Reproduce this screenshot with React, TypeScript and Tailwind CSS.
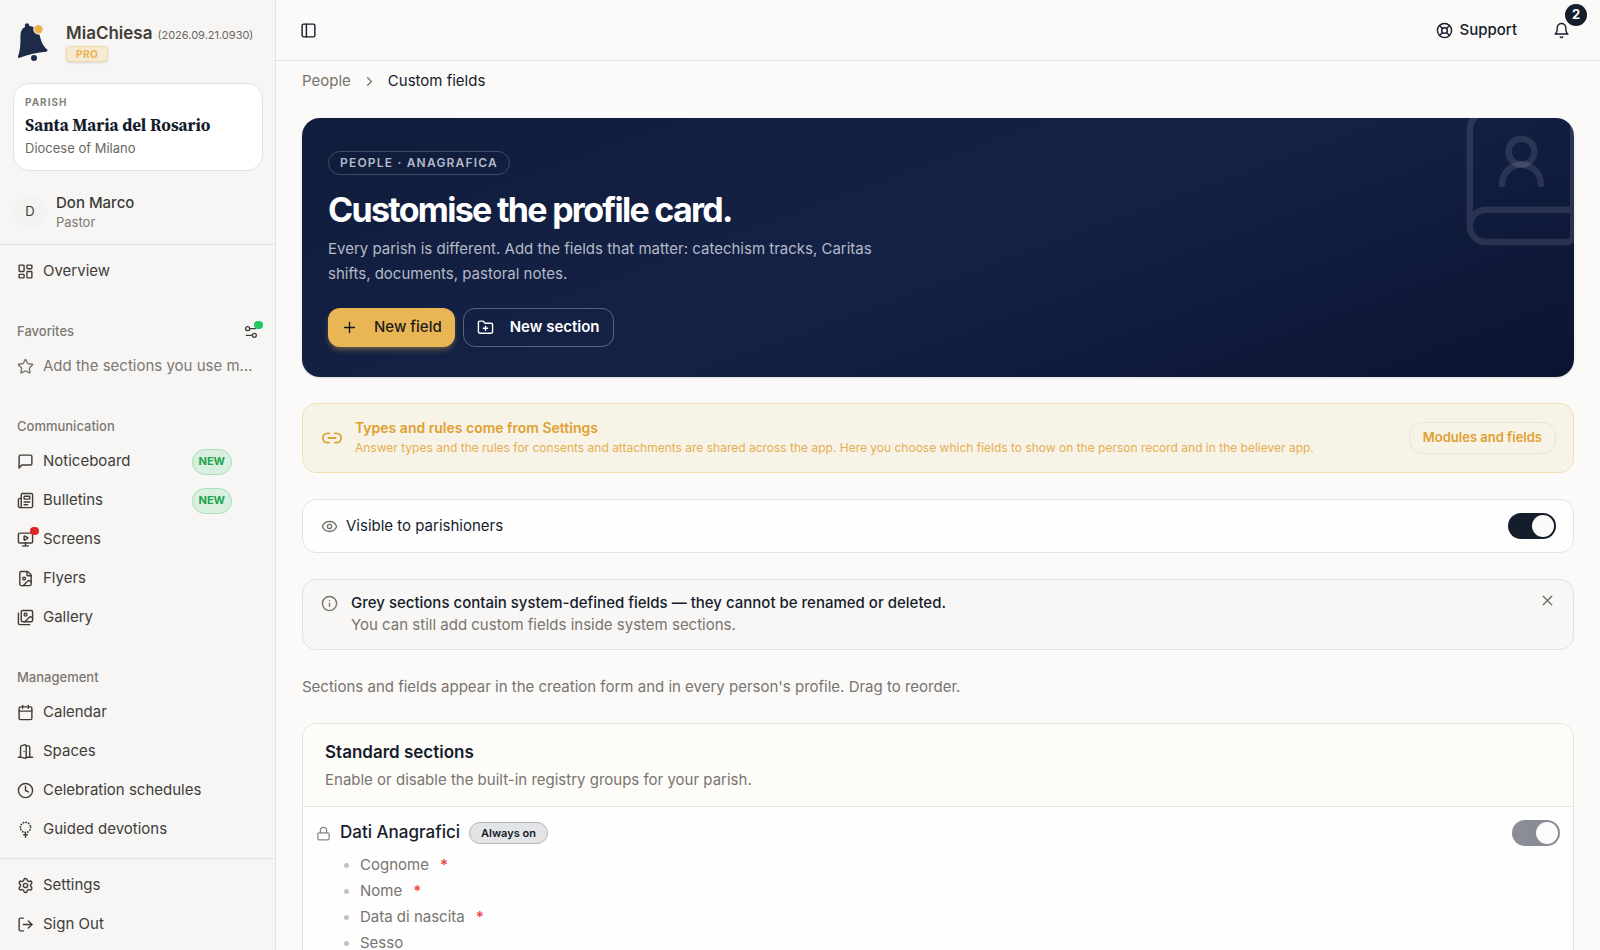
import type { ComponentType, ReactNode } from 'react'
import {
  Calendar,
  ChevronRight,
  Clock,
  Eye,
  FileImage,
  FolderPlus,
  Info,
  LayoutDashboard,
  LifeBuoy,
  Link2,
  Lock,
  LogOut,
  MonitorPlay,
  Newspaper,
  PanelLeft,
  Plus,
  Settings,
  Settings2,
  Star,
  X,
} from 'lucide-react'

type Icon = ComponentType<{ className?: string }>

interface NavItem {
  label: string
  icon: Icon
  isNew?: boolean
  alert?: boolean
}

function Svg({ className, children }: { className?: string; children: ReactNode }) {
  return (
    <svg
      className={className}
      viewBox="0 0 24 24"
      fill="none"
      stroke="currentColor"
      strokeWidth={2}
      strokeLinecap="round"
      strokeLinejoin="round"
    >
      {children}
    </svg>
  )
}

function MessageIcon({ className }: { className?: string }) {
  return (
    <Svg className={className}>
      <path d="M21 15a2 2 0 0 1-2 2H7l-4 4V5a2 2 0 0 1 2-2h14a2 2 0 0 1 2 2z" />
    </Svg>
  )
}

function ImagesIcon({ className }: { className?: string }) {
  return (
    <Svg className={className}>
      <path d="M18 22H4a2 2 0 0 1-2-2V6" />
      <path d="m22 13-1.296-1.296a2.41 2.41 0 0 0-3.408 0L11 18" />
      <circle cx="12" cy="8" r="2" />
      <rect width="16" height="16" x="6" y="2" rx="2" />
    </Svg>
  )
}

function DoorIcon({ className }: { className?: string }) {
  return (
    <Svg className={className}>
      <path d="M13 4h3a2 2 0 0 1 2 2v14" />
      <path d="M2 20h3" />
      <path d="M13 20h9" />
      <path d="M10 12v.01" />
      <path d="M13 4.562v16.157a1 1 0 0 1-1.242.97L5 20V5.562a2 2 0 0 1 1.515-1.94l4-1A2 2 0 0 1 13 4.561Z" />
    </Svg>
  )
}

function BellIcon({ className }: { className?: string }) {
  return (
    <Svg className={className}>
      <path d="M6 8a6 6 0 0 1 12 0c0 7 3 9 3 9H3s3-2 3-9" />
      <path d="M10.3 21a1.94 1.94 0 0 0 3.4 0" />
    </Svg>
  )
}

function RosaryIcon({ className }: { className?: string }) {
  return (
    <Svg className={className}>
      <circle cx="12" cy="9" r="7.2" strokeDasharray="0.1 3.67" strokeWidth={2.6} />
      <path d="M12 17v6M9.500 19.500h5" strokeWidth={2} />
    </Svg>
  )
}

function Logo() {
  return (
    <svg className="h-10 w-8 shrink-0" viewBox="0 0 32 40">
      <g fill="#1e2b48">
        <circle cx="10" cy="3.5" r="2.2" />
        <path d="M9 4.5C5 6 3.6 9 3.5 14c-.1 6 .2 13-2.4 20-.5 1.500.2 2.200 1.500 1.700 9-3.500 18-5.500 26.500-6 1.700-.1 2-1.200.9-2.100C25 23 24 18 22.500 13 20.500 6.500 16 2.600 9 4.500Z" />
        <circle cx="17" cy="36" r="3" />
      </g>
      <circle cx="21.500" cy="7.300" r="5.200" fill="#f7f6f4" />
      <circle cx="21.500" cy="7.300" r="4.200" fill="#eab350" />
    </svg>
  )
}

const COMMUNICATION: NavItem[] = [
  { label: 'Noticeboard', icon: MessageIcon, isNew: true },
  { label: 'Bulletins', icon: Newspaper, isNew: true },
  { label: 'Screens', icon: MonitorPlay, alert: true },
  { label: 'Flyers', icon: FileImage },
  { label: 'Gallery', icon: ImagesIcon },
]

const MANAGEMENT: NavItem[] = [
  { label: 'Calendar', icon: Calendar },
  { label: 'Spaces', icon: DoorIcon },
  { label: 'Celebration schedules', icon: Clock },
  { label: 'Guided devotions', icon: RosaryIcon },
]

const FIELDS = [
  { label: 'Cognome', required: true },
  { label: 'Nome', required: true },
  { label: 'Data di nascita', required: true },
  { label: 'Sesso', required: false },
]

function NavLink({ label, icon: ItemIcon, isNew, alert }: NavItem) {
  return (
    <a href="#" className="flex h-[35px] items-center gap-[9px] rounded-lg px-[17px] text-[#403d39] hover:bg-black/5">
      <span className="relative shrink-0">
        <ItemIcon className="size-[17px]" />
        {alert && <span className="absolute -top-1 -right-[5px] h-2 w-[9px] rounded-full bg-[#dc2626]" />}
      </span>
      <span className="truncate">{label}</span>
      {isNew && (
        <span className="mr-[26px] ml-auto flex h-[26px] items-center rounded-full border border-[#a9dfbd] bg-[#d9efe0] px-[6px] text-[11px] font-bold text-[#1fa34f]">
          NEW
        </span>
      )}
    </a>
  )
}

function NavGroup({ title, items }: { title: string; items: NavItem[] }) {
  return (
    <section>
      <h2 className="flex h-[34px] items-center px-[17px] text-[13px] font-medium text-[#7c7873]">{title}</h2>
      <div className="flex flex-col gap-1">
        {items.map((item) => (
          <NavLink key={item.label} {...item} />
        ))}
      </div>
    </section>
  )
}

function Sidebar() {
  return (
    <aside className="flex w-[276px] shrink-0 flex-col border-r border-[#e3e3e1] bg-[#f7f6f4] text-[#403d39]">
      <div className="flex flex-col border-b border-[#e3e3e1] px-3 pt-[22px] pb-[13px] pl-[13px]">
        <div className="flex gap-[17px] pl-1">
          <Logo />
          <div className="flex flex-col items-start">
            <div className="flex items-baseline gap-[5px] leading-[22px]">
              <span className="text-[17px] font-semibold">MiaChiesa</span>
              <span className="text-[11px] text-[#6b6762]">(2026.09.21.0930)</span>
            </div>
            <span className="flex h-4 items-center rounded-[4px] border border-[#f3d9a8] bg-[#f7ead2] px-[9px] text-[10px] font-bold tracking-wider text-[#eab350] shadow-sm">
              PRO
            </span>
          </div>
        </div>

        <div className="mt-[21px] flex h-[88px] flex-col rounded-2xl border border-[#e3e3e1] bg-white px-[11px] pt-[10px]">
          <span className="text-[10px] leading-4 font-bold tracking-widest text-[#85817b]">PARISH</span>
          <span className="font-['Source_Serif_4','Liberation_Serif',serif] text-[17px] leading-[30px] font-bold text-[#151c2c]">
            Santa Maria del Rosario
          </span>
          <span className="text-[13px] leading-4 text-[#6b6762]">Diocese of Milano</span>
        </div>

        <div className="mt-[22px] flex items-center gap-[9px]">
          <span className="flex size-[34px] items-center justify-center rounded-full bg-[#f3f3f1] text-[13px]">D</span>
          <div className="flex flex-col">
            <span className="text-[15px] leading-5 font-medium">Don Marco</span>
            <span className="text-[13px] leading-[18px] text-[#7c7873]">Pastor</span>
          </div>
        </div>
      </div>

      <nav className="flex min-h-0 flex-1 flex-col gap-[26px] overflow-hidden pt-[9px] text-[15px]">
        <NavLink label="Overview" icon={LayoutDashboard} />
        <section>
          <div className="flex h-[34px] items-center justify-between pr-4 pl-[17px]">
            <h2 className="text-[13px] font-medium text-[#7c7873]">Favorites</h2>
            <button type="button" aria-label="Edit favorites" className="relative">
              <Settings2 className="size-4" />
              <span className="absolute -top-[3px] -right-1 h-2 w-[9px] rounded-full bg-[#22c55e]" />
            </button>
          </div>
          <a href="#" className="flex h-[35px] items-center gap-[9px] px-[17px] text-[#7c7873]">
            <Star className="size-[17px] shrink-0" />
            <span className="truncate">Add the sections you use most here</span>
          </a>
        </section>
        <NavGroup title="Communication" items={COMMUNICATION} />
        <NavGroup title="Management" items={MANAGEMENT} />
      </nav>

      <div className="flex flex-col gap-1 border-t border-[#e3e3e1] pt-[9px] pb-2 text-[15px]">
        <NavLink label="Settings" icon={Settings} />
        <NavLink label="Sign Out" icon={LogOut} />
      </div>
    </aside>
  )
}

function Switch({ label, disabled }: { label: string; disabled?: boolean }) {
  return (
    <input
      type="checkbox"
      role="switch"
      aria-label={label}
      defaultChecked
      disabled={disabled}
      className="flex h-[26px] w-12 shrink-0 appearance-none items-center rounded-full bg-[#a8a8a8] px-[2px] before:size-[22px] before:rounded-full before:bg-[#fbfaf8] checked:justify-end checked:bg-[#151c2c] disabled:opacity-50"
    />
  )
}

function Hero() {
  return (
    <section className="relative overflow-hidden rounded-[18px] bg-linear-[160deg,#101c3b_0%,#142246_50%,#0b1431_100%] px-[26px] pt-[33px] pb-[30px] shadow-sm">
      <svg
        className="absolute -top-[18px] -right-[25px] size-[155px] text-white/11"
        viewBox="0 0 24 24"
        fill="none"
        strokeWidth={1}
        stroke="currentColor"
        strokeLinecap="round"
        strokeLinejoin="round"
      >
        <path d="M15 13a3 3 0 1 0-6 0" />
        <path d="M4 19.500v-15A2.500 2.500 0 0 1 6.500 2H19a1 1 0 0 1 1 1v18a1 1 0 0 1-1 1H6.500a1 1 0 0 1 0-5H20" />
        <circle cx="12" cy="8" r="2" />
      </svg>
      <div className="flex flex-col items-start">
        <span className="flex h-6 items-center rounded-full border border-white/20 px-[11px] text-[12px] font-semibold tracking-widest text-[#b4bac7]">
          PEOPLE · ANAGRAFICA
        </span>
        <h1 className="mt-[14px] text-[34px] leading-[42px] font-bold tracking-tighter text-white">
          Customise the profile card.
        </h1>
        <p className="mt-[5px] max-w-[580px] text-[15px] leading-[25px] text-[#b4bac7]">
          Every parish is different. Add the fields that matter: catechism tracks, Caritas shifts, documents, pastoral
          notes.
        </p>
        <div className="mt-[22px] flex gap-2">
          <button
            type="button"
            className="flex h-[39px] items-center gap-4 rounded-xl bg-[#eab554] px-[13px] text-[15px] font-medium text-[#1c1c1c] shadow-md shadow-[#eab554]/30"
          >
            <Plus className="size-[17px]" />
            New field
          </button>
          <button
            type="button"
            className="flex h-[39px] items-center gap-4 rounded-xl border border-white/30 px-[13px] text-[15px] font-semibold text-white"
          >
            <FolderPlus className="size-[17px]" />
            New section
          </button>
        </div>
      </div>
    </section>
  )
}

export default function App() {
  return (
    <div className="flex h-screen overflow-hidden bg-[#fbfaf8] font-['Inter',sans-serif] text-[15px] text-[#151c2c] antialiased">
      <Sidebar />

      <div className="flex min-w-0 flex-1 flex-col">
        <header className="flex h-[61px] shrink-0 items-center justify-between border-b border-[#e3e3e1] px-6">
          <button type="button" aria-label="Toggle sidebar">
            <PanelLeft className="size-[17px]" />
          </button>
          <div className="flex items-center gap-9 pr-[6px]">
            <a href="#" className="flex items-center gap-[7px] font-medium">
              <LifeBuoy className="size-[17px]" />
              Support
            </a>
            <button type="button" aria-label="Notifications" className="relative">
              <BellIcon className="size-[17px]" />
              <span className="absolute -top-[18px] left-3 flex size-[22px] items-center justify-center rounded-full bg-[#151c2c] text-[13px] font-bold text-white">
                2
              </span>
            </button>
          </div>
        </header>

        <main className="flex min-h-0 flex-1 flex-col gap-[26px] overflow-hidden px-[26px] pt-[9px] *:shrink-0">
          <nav aria-label="Breadcrumb" className="flex h-[22px] items-center gap-[11px]">
            <a href="#" className="text-[#78746e]">
              People
            </a>
            <ChevronRight className="size-[15px] text-[#78746e]" />
            <span>Custom fields</span>
          </nav>

          <Hero />

          <section className="flex items-center gap-3 rounded-[14px] border border-[#f3dfb5] bg-[#f7f3e7] py-[14px] pr-[17px] pl-[18px]">
            <Link2 className="size-[22px] shrink-0 text-[#e0a238]" />
            <div className="min-w-0 flex-1">
              <h2 className="text-[14px] leading-5 font-semibold text-[#e0a030]">Types and rules come from Settings</h2>
              <p className="text-[12px] leading-5 text-[#e6ae52]">
                Answer types and the rules for consents and attachments are shared across the app. Here you choose which
                fields to show on the person record and in the believer app.
              </p>
            </div>
            <button
              type="button"
              className="h-8 shrink-0 rounded-[14px] border border-[#e9e5db] px-[13px] text-[13px] font-semibold text-[#e0a030]"
            >
              Modules and fields
            </button>
          </section>

          <label className="flex h-[54px] items-center gap-2 rounded-[14px] border border-[#e3e3e1] bg-[#fefefe] pr-[17px] pl-[18px]">
            <Eye className="size-[17px] text-[#78746e]" />
            <span className="flex-1">Visible to parishioners</span>
            <Switch label="Visible to parishioners" />
          </label>

          <section className="flex items-start gap-[13px] rounded-[14px] border border-[#e3e3e1] bg-[#f8f7f5] py-[12px] pr-[17px] pl-[18px]">
            <Info className="mt-[3px] size-[17px] shrink-0 text-[#78746e]" />
            <div className="flex-1 leading-[22px]">
              <p className="font-medium">
                Grey sections contain system-defined fields — they cannot be renamed or deleted.
              </p>
              <p className="pb-px text-[#78746e]">You can still add custom fields inside system sections.</p>
            </div>
            <button type="button" aria-label="Dismiss" className="text-[#78746e]">
              <X className="size-[17px]" />
            </button>
          </section>

          <p className="py-px leading-[19px] text-[#78746e]">
            Sections and fields appear in the creation form and in every person's profile. Drag to reorder.
          </p>

          <section className="rounded-[14px] border border-[#e3e3e1] bg-[#fefefe]">
            <div className="rounded-t-[14px] border-b border-[#e3e3e1] bg-[#fdfcf9] px-[22px] pt-[14px] pb-3">
              <h2 className="text-[17px] leading-7 font-semibold">Standard sections</h2>
              <p className="leading-7 text-[#78746e]">
                Enable or disable the built-in registry groups for your parish.
              </p>
            </div>
            <div className="px-[13px] pt-[13px] pb-6">
              <div className="flex items-center gap-[9px]">
                <Lock className="size-[15px] text-[#8b8781]" />
                <h3 className="text-[17px] font-medium">Dati Anagrafici</h3>
                <span className="flex h-[22px] items-center rounded-full border border-[#b3b5b9] bg-[#e3e4e5] px-[11px] text-[11px] font-semibold">
                  Always on
                </span>
                <span className="ml-auto flex">
                  <Switch label="Dati Anagrafici" disabled />
                </span>
              </div>
              <ul className="mt-[6px] pl-7 text-[#78746e]">
                {FIELDS.map((field) => (
                  <li key={field.label} className="flex h-[26px] items-center gap-[11px]">
                    <span className="size-[5px] rounded-full bg-[#c4c2bf]" />
                    {field.label}
                    {field.required && <span className="font-semibold text-[#ef4444]">*</span>}
                  </li>
                ))}
              </ul>
            </div>
          </section>
        </main>
      </div>
    </div>
  )
}
